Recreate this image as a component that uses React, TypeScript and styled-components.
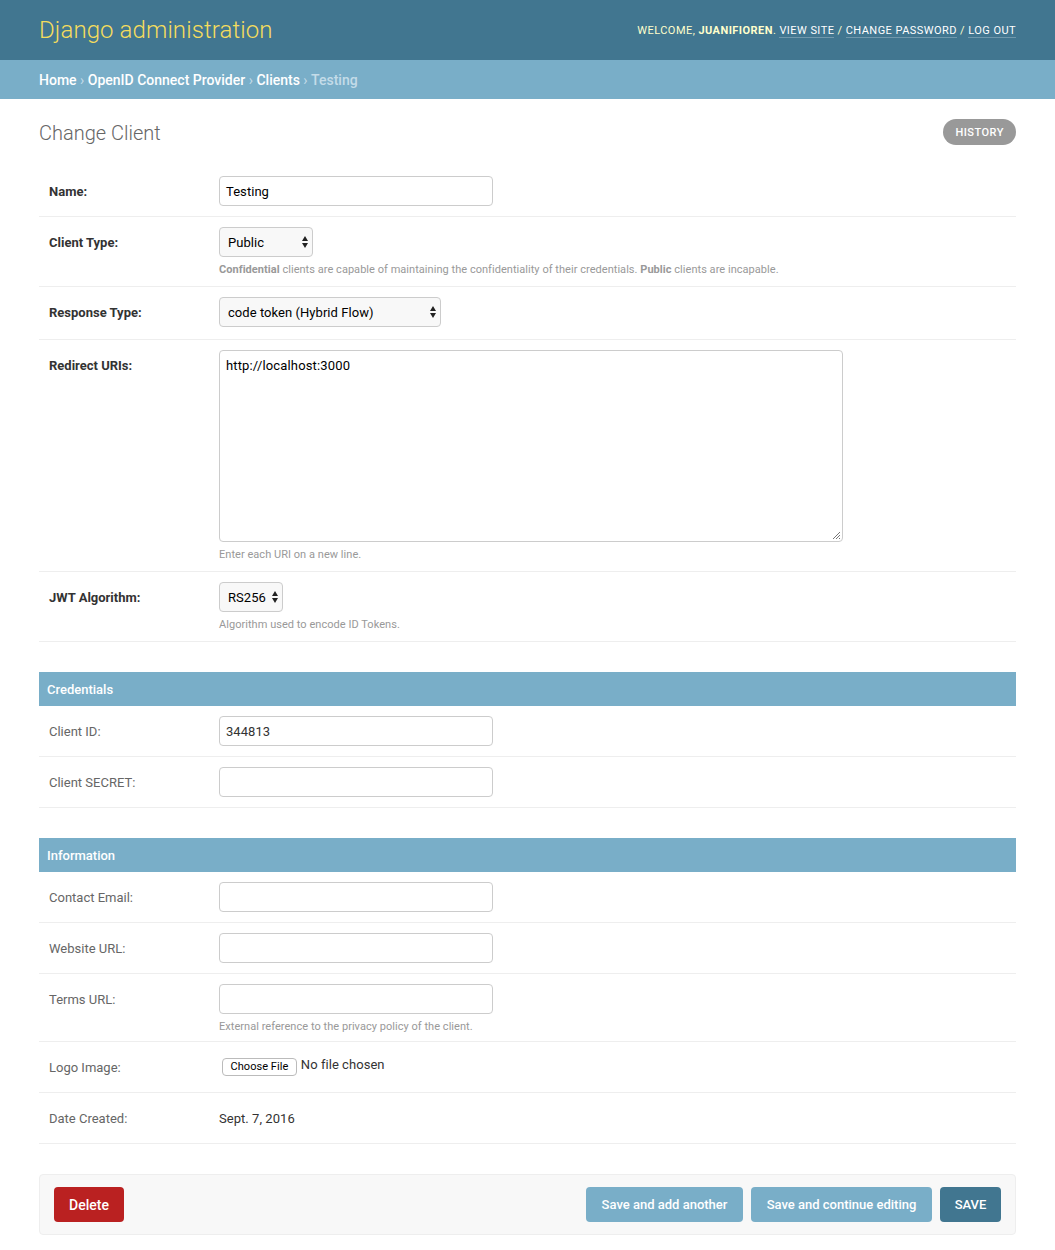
import { createGlobalStyle, styled } from "styled-components";

const Global = createGlobalStyle`
  html, body { margin: 0; padding: 0; background: #fff; }
  body {
    font-family: "Roboto", "Liberation Sans", Arial, sans-serif;
    font-size: 14px;
    color: #333;
  }
  * { box-sizing: border-box; }
`;

const Header = styled.div`
  height: 60px;
  background: #417690;
  color: #ffc;
  padding: 0 39px;
  display: flex;
  align-items: center;
  justify-content: space-between;
`;

const Branding = styled.h1`
  margin: 0;
  font-size: 24px;
  font-weight: 300;
  letter-spacing: 0.1px;
  color: #f5dd5d;
`;

const UserTools = styled.div`
  font-size: 11px;
  font-weight: 400;
  letter-spacing: 0.45px;
  text-transform: uppercase;
`;

const ToolLink = styled.a`
  color: #fff;
  border-bottom: 1px solid rgba(255, 255, 255, 0.25);
`;

const Breadcrumbs = styled.div`
  height: 39px;
  background: #79aec8;
  padding: 0 39px;
  display: flex;
  align-items: center;
  font-size: 14px;
  font-weight: 500;
  color: #c4dce8;
`;

const Crumb = styled.a`
  color: #fff;
`;

const Separator = styled.span`
  margin: 0 3.5px;
  font-weight: 400;
`;

const Content = styled.div`
  padding: 20px 39px 0;
`;

const TitleRow = styled.div`
  display: flex;
  justify-content: space-between;
  align-items: center;
  height: 27px;
  margin-bottom: 20px;
`;

const Title = styled.h2`
  margin: 0;
  font-size: 20px;
  font-weight: 300;
  color: #666;
`;

const HistoryButton = styled.a`
  height: 26px;
  padding: 0 12px;
  margin-top: -1px;
  border-radius: 15px;
  background: #999;
  color: #fff;
  font-size: 11px;
  font-weight: 500;
  letter-spacing: 0.5px;
  display: flex;
  align-items: center;
`;

const Row = styled.div<{ $height: number }>`
  display: flex;
  height: ${(p) => p.$height}px;
  padding: 10px;
  border-bottom: 1px solid #eee;
`;

const Label = styled.label<{ $required?: boolean }>`
  width: 170px;
  flex: none;
  padding-top: 8px;
  font-size: 13px;
  font-weight: ${(p) => (p.$required ? 700 : 400)};
  color: ${(p) => (p.$required ? "#333" : "#666")};
`;

const Field = styled.div`
  display: flex;
  flex-direction: column;
  align-items: flex-start;
`;

const TextInput = styled.div<{ $dim?: boolean }>`
  width: 274px;
  height: 30px;
  flex: none;
  padding: 0 6px;
  border: 1px solid #ccc;
  border-radius: 4px;
  background: #fff;
  font-size: 13px;
  letter-spacing: 0.05px;
  color: ${(p) => (p.$dim ? "#333" : "#000")};
  display: flex;
  align-items: center;
`;

const TextArea = styled.div`
  width: 624px;
  height: 192px;
  flex: none;
  padding: 7px 6px;
  border: 1px solid #ccc;
  border-radius: 4px;
  font-size: 13px;
  letter-spacing: 0.15px;
  line-height: 16px;
  color: #000;
  position: relative;
`;

const Grip = styled.svg`
  position: absolute;
  right: 1px;
  bottom: 1px;
`;

const Select = styled.div<{ $width: number }>`
  width: ${(p) => p.$width}px;
  height: 30px;
  flex: none;
  padding: 0 4px 0 8px;
  border: 1px solid #ccc;
  border-radius: 4px;
  background: #f8f8f8;
  font-size: 13px;
  letter-spacing: 0.05px;
  color: #000;
  display: flex;
  align-items: center;
  justify-content: space-between;
`;

const Help = styled.p`
  margin: 6px 0 0;
  font-size: 11px;
  letter-spacing: 0.04px;
  line-height: 14px;
  color: #999;
`;

const PlainText = styled.div`
  padding-top: 8px;
  font-size: 13px;
  letter-spacing: 0.05px;
  color: #333;
`;

const FileRow = styled.div`
  display: flex;
  align-items: center;
  gap: 4px;
  margin-top: 5px;
  padding-left: 3px;
  font-size: 13px;
  letter-spacing: 0.05px;
  color: #333;
`;

const FileButton = styled.span`
  height: 18px;
  padding: 0 7.5px;
  border: 1px solid #bbb;
  border-radius: 4px;
  background: #fff;
  font-size: 11px;
  color: #000;
  display: flex;
  align-items: center;
`;

const FileName = styled.span`
  margin-bottom: 4px;
`;

const Section = styled.div`
  margin-top: 30px;
`;

const SectionTitle = styled.h3`
  margin: 0;
  height: 34px;
  padding: 0 8px;
  background: #79aec8;
  color: #fff;
  font-size: 13px;
  font-weight: 500;
  display: flex;
  align-items: center;
`;

const SubmitRow = styled.div`
  margin-top: 30px;
  height: 61px;
  padding: 0 14px;
  background: #f8f8f8;
  border: 1px solid #eee;
  border-radius: 4px;
  display: flex;
  align-items: center;
  gap: 8px;
`;

const Spacer = styled.div`
  flex: 1;
`;

const ActionButton = styled.button<{ $tone: "delete" | "save" | "default"; $width: number }>`
  width: ${(p) => p.$width}px;
  height: 35px;
  border: 0;
  border-radius: 4px;
  font-family: inherit;
  font-size: ${(p) => (p.$tone === "delete" ? 14 : 13)}px;
  font-weight: 500;
  color: #fff;
  background: ${(p) =>
    p.$tone === "delete" ? "#ba2121" : p.$tone === "save" ? "#417690" : "#79aec8"};
`;

function Arrows() {
  return (
    <svg width="6" height="12" viewBox="0 0 6 12">
      <path d="M3 0 L6 5 H0 Z M3 12 L0 7 H6 Z" fill="#222" />
    </svg>
  );
}

export default function App() {
  return (
    <>
      <Global />
      <Header>
        <Branding>Django administration</Branding>
        <UserTools>
          Welcome, <strong>juanifioren</strong>. <ToolLink>View site</ToolLink> /{" "}
          <ToolLink>Change password</ToolLink> / <ToolLink>Log out</ToolLink>
        </UserTools>
      </Header>
      <Breadcrumbs>
        <Crumb>Home</Crumb>
        <Separator>›</Separator>
        <Crumb>OpenID Connect Provider</Crumb>
        <Separator>›</Separator>
        <Crumb>Clients</Crumb>
        <Separator>›</Separator>
        Testing
      </Breadcrumbs>
      <Content>
        <TitleRow>
          <Title>Change Client</Title>
          <HistoryButton>HISTORY</HistoryButton>
        </TitleRow>

        <Row $height={51}>
          <Label $required>Name:</Label>
          <Field>
            <TextInput>Testing</TextInput>
          </Field>
        </Row>
        <Row $height={70}>
          <Label $required>Client Type:</Label>
          <Field>
            <Select $width={94}>
              Public <Arrows />
            </Select>
            <Help>
              <strong>Confidential</strong> clients are capable of maintaining the confidentiality
              of their credentials. <strong>Public</strong> clients are incapable.
            </Help>
          </Field>
        </Row>
        <Row $height={53}>
          <Label $required>Response Type:</Label>
          <Field>
            <Select $width={222}>
              code token (Hybrid Flow) <Arrows />
            </Select>
          </Field>
        </Row>
        <Row $height={232}>
          <Label $required>Redirect URIs:</Label>
          <Field>
            <TextArea>
              http://localhost:3000
              <Grip width="10" height="10" viewBox="0 0 10 10">
                <path d="M9 2 L2 9 M9 5 L5 9 M9 8 L8 9" stroke="#777" fill="none" />
              </Grip>
            </TextArea>
            <Help>Enter each URI on a new line.</Help>
          </Field>
        </Row>
        <Row $height={70}>
          <Label $required>JWT Algorithm:</Label>
          <Field>
            <Select $width={64}>
              RS256 <Arrows />
            </Select>
            <Help>Algorithm used to encode ID Tokens.</Help>
          </Field>
        </Row>

        <Section>
          <SectionTitle>Credentials</SectionTitle>
          <Row $height={51}>
            <Label>Client ID:</Label>
            <Field>
              <TextInput $dim>344813</TextInput>
            </Field>
          </Row>
          <Row $height={51}>
            <Label>Client SECRET:</Label>
            <Field>
              <TextInput />
            </Field>
          </Row>
        </Section>

        <Section>
          <SectionTitle>Information</SectionTitle>
          <Row $height={51}>
            <Label>Contact Email:</Label>
            <Field>
              <TextInput />
            </Field>
          </Row>
          <Row $height={51}>
            <Label>Website URL:</Label>
            <Field>
              <TextInput />
            </Field>
          </Row>
          <Row $height={68}>
            <Label>Terms URL:</Label>
            <Field>
              <TextInput />
              <Help>External reference to the privacy policy of the client.</Help>
            </Field>
          </Row>
          <Row $height={51}>
            <Label>Logo Image:</Label>
            <Field>
              <FileRow>
                <FileButton>Choose File</FileButton>
                <FileName>No file chosen</FileName>
              </FileRow>
            </Field>
          </Row>
          <Row $height={51}>
            <Label>Date Created:</Label>
            <Field>
              <PlainText>Sept. 7, 2016</PlainText>
            </Field>
          </Row>
        </Section>

        <SubmitRow>
          <ActionButton $tone="delete" $width={70}>
            Delete
          </ActionButton>
          <Spacer />
          <ActionButton $tone="default" $width={157}>
            Save and add another
          </ActionButton>
          <ActionButton $tone="default" $width={181}>
            Save and continue editing
          </ActionButton>
          <ActionButton $tone="save" $width={61}>
            SAVE
          </ActionButton>
        </SubmitRow>
      </Content>
    </>
  );
}
